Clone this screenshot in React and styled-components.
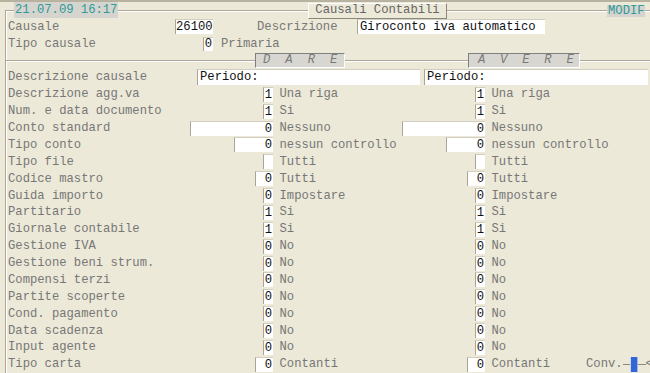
import React from 'react';
import styled, { createGlobalStyle } from 'styled-components';

const Global = createGlobalStyle`
  html, body { margin: 0; padding: 0; background: #ECE9D8; }
  body {
    font-family: "Liberation Mono", "DejaVu Sans Mono", monospace;
    font-size: 12.2px;
    color: #777;
  }
`;

const Screen = styled.div`
  width: 650px;
  height: 373px;
  overflow: hidden;
  box-sizing: border-box;
  border-top: 2px solid #b7b3a0;
  display: flex;
  flex-direction: column;
  white-space: nowrap;
`;

const Header = styled.div`
  height: 16px;
  display: flex;
  padding-left: 5px;
`;

const Corner = styled.div`
  width: 9px;
  margin-top: 8px;
  box-sizing: border-box;
  border-top: 1px solid #aca899;
  border-left: 1px solid #aca899;
  box-shadow: inset 1px 1px 0 #fff;
`;

const Rule = styled.div`
  flex: ${p => (p.$w ? 'none' : '1')};
  width: ${p => (p.$w ? `${p.$w}px` : 'auto')};
  height: 2px;
  margin-top: ${p => p.$top ?? 8}px;
  box-sizing: border-box;
  border-top: 1px solid #aca899;
  border-bottom: 1px solid #fff;
`;

const Tag = styled.div`
  width: ${p => p.$w}px;
  height: ${p => p.$h}px;
  margin-top: ${p => p.$top || 0}px;
  background: #d6d4ce;
  color: #2e9a9a;
  line-height: ${p => p.$h}px;
  padding-left: 1px;
  box-sizing: border-box;
`;

const Title = styled.div`
  width: 139px;
  height: 16px;
  margin-top: 1px;
  box-sizing: border-box;
  border: 1px solid;
  border-color: #fff #8a877c #8a877c #fff;
  color: #666;
  line-height: 13px;
  text-align: center;
`;

const Body = styled.div`
  flex: 1;
  margin-left: 5px;
  border-left: 1px solid #aca899;
  box-shadow: inset 1px 0 0 #fff;
  display: flex;
  flex-direction: column;
`;

const HeadRow = styled.div`
  height: 17px;
  display: flex;
  align-items: center;
  padding-left: 2px;
`;

const Label = styled.span`
  width: ${p => (p.$w ? `${p.$w}px` : 'auto')};
  margin-left: ${p => p.$ml || 0}px;
  flex: none;
  color: #777;
`;

const Field = styled.div`
  flex: none;
  width: ${p => p.$w}px;
  height: ${p => p.$h || 15}px;
  box-sizing: border-box;
  background: #fff;
  color: #111;
  border-left: 1px solid #a9a699;
  border-top: 1px solid #d2cebf;
  text-align: ${p => (p.$left ? 'left' : 'right')};
  padding: ${p => (p.$left ? '0 0 0 2px' : '0 1px 0 0')};
  line-height: ${p => (p.$h || 15) - 1}px;
`;

const SepRow = styled.div`
  height: 17px;
  display: flex;
`;

const SideTab = styled.div`
  width: ${p => p.$w}px;
  height: 15px;
  margin-top: 1px;
  box-sizing: border-box;
  background: #d8d6d0;
  border: 1px solid;
  border-color: #7f7f7f #fff #fff #7f7f7f;
  padding-left: ${p => p.$pl}px;
  font-style: italic;
  font-family: "Liberation Mono", "Courier New", monospace;
  color: #7a7a7a;
  letter-spacing: ${p => p.$ls}px;
  line-height: 13px;
`;

const Row = styled.div`
  height: 16.88px;
  display: grid;
  grid-template-columns: ${p => (p.$wide ? '189px 227px 1fr' : '182px 212px 1fr')};
  align-items: center;
  padding-left: 2px;
`;

const Cell = styled.div`
  display: flex;
  align-items: center;
`;

const Slot = styled.div`
  width: 83px;
  display: flex;
  justify-content: flex-end;
`;

const Desc = styled.span`
  margin-left: 6.5px;
  color: #777;
`;

const Conv = styled.div`
  margin-left: 36px;
  display: flex;
  align-items: center;
`;

const Dash = styled.span`
  width: ${p => p.$w}px;
  height: 1px;
  background: #8c8a80;
`;

const BlueBox = styled.span`
  width: 8px;
  height: 15px;
  box-sizing: border-box;
  background: #3266d2;
  border-left: 1px solid #c9d6f2;
  border-right: 1px solid #9db5e8;
`;

const rows = [
  ['Descrizione agg.va', 10, '1', 'Una riga'],
  ['Num. e data documento', 10, '1', 'Si'],
  ['Conto standard', 83, '0', 'Nessuno'],
  ['Tipo conto', 39, '0', 'nessun controllo'],
  ['Tipo file', 10, '', 'Tutti'],
  ['Codice mastro', 18, '0', 'Tutti'],
  ['Guida importo', 10, '0', 'Impostare'],
  ['Partitario', 10, '1', 'Si'],
  ['Giornale contabile', 10, '1', 'Si'],
  ['Gestione IVA', 10, '0', 'No'],
  ['Gestione beni strum.', 10, '0', 'No'],
  ['Compensi terzi', 10, '0', 'No'],
  ['Partite scoperte', 10, '0', 'No'],
  ['Cond. pagamento', 10, '0', 'No'],
  ['Data scadenza', 10, '0', 'No'],
  ['Input agente', 10, '0', 'No'],
  ['Tipo carta', 18, '0', 'Contanti'],
];

export default function App() {
  return (
    <>
      <Global />
      <Screen>
        <Header>
          <Corner />
          <Tag $w={104} $h={16}>21.07.09 16:17</Tag>
          <Rule $w={190} />
          <Title>Causali Contabili</Title>
          <Rule $w={160} />
          <Tag $w={38} $h={12} $top={3}>MODIF</Tag>
          <Rule />
        </Header>
        <Body>
          <HeadRow>
            <Label $w={167}>Causale</Label>
            <Field $w={38}>26100</Field>
            <Label $w={100} $ml={44}>Descrizione</Label>
            <Field $w={188} $left>Giroconto iva automatico</Field>
          </HeadRow>
          <HeadRow>
            <Label $w={195}>Tipo causale</Label>
            <Field $w={10} $h={14}>0</Field>
            <Label $ml={8}>Primaria</Label>
          </HeadRow>
          <SepRow>
            <Rule $w={249} />
            <SideTab $w={90} $pl={7} $ls={15}>DARE</SideTab>
            <Rule $w={123} />
            <SideTab $w={112} $pl={9} $ls={14.8}>AVERE</SideTab>
            <Rule />
          </SepRow>
          <Row $wide>
            <Label>Descrizione causale</Label>
            <Field $w={223} $h={16} $left>Periodo:</Field>
            <Field $w={224} $h={16} $left>Periodo:</Field>
          </Row>
          {rows.map(([label, w, v, d], i) => (
            <Row key={label}>
              <Label>{label}</Label>
              <Cell>
                <Slot><Field $w={w}>{v}</Field></Slot>
                <Desc>{d}</Desc>
              </Cell>
              <Cell>
                <Slot><Field $w={w}>{v}</Field></Slot>
                <Desc>{d}</Desc>
                {i === rows.length - 1 && (
                  <Conv>
                    <Label>Conv.</Label>
                    <Dash $w={7} />
                    <BlueBox />
                    <Dash $w={8} />
                    <Label>&lt;</Label>
                  </Conv>
                )}
              </Cell>
            </Row>
          ))}
        </Body>
      </Screen>
    </>
  );
}
